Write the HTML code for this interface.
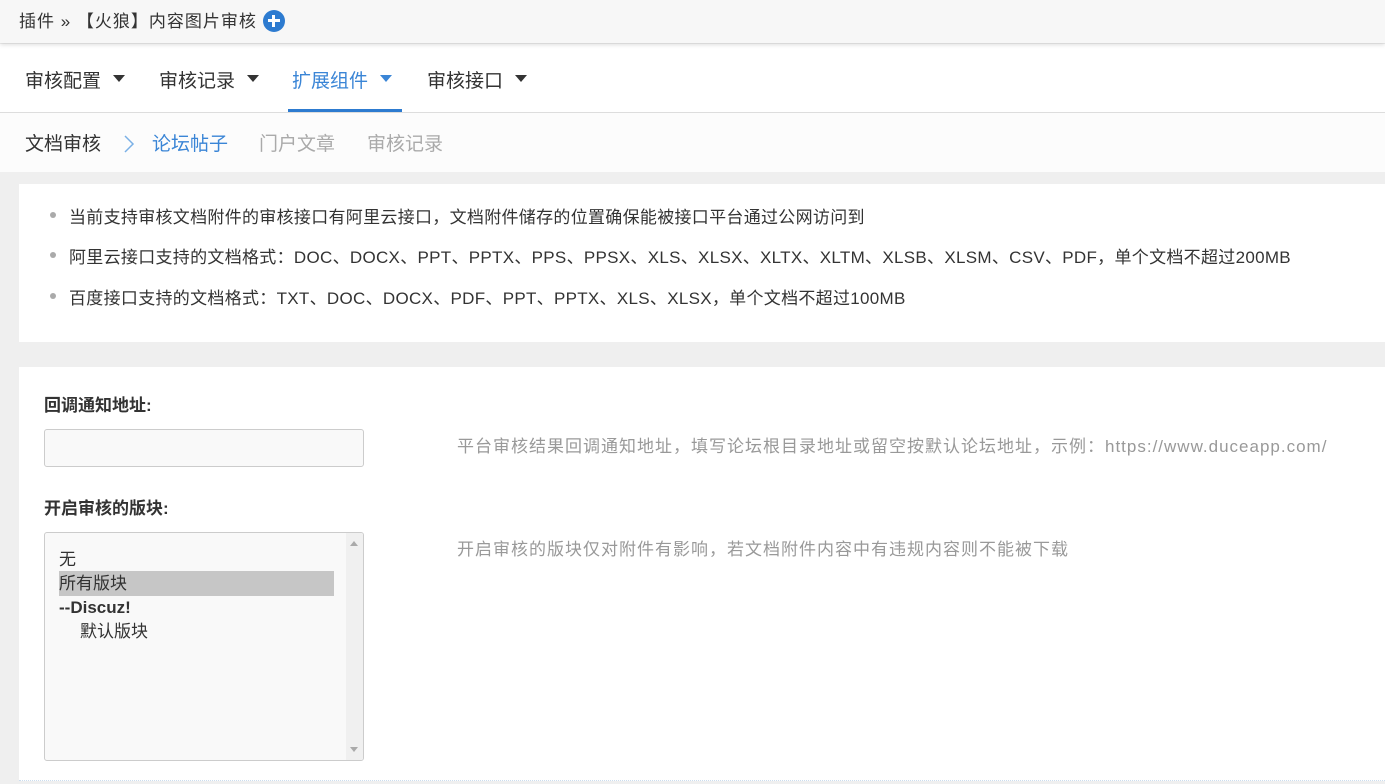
<!DOCTYPE html>
<html><head><meta charset="utf-8"><style>
*{margin:0;padding:0;box-sizing:border-box}
body{width:1385px;height:784px;overflow:hidden;background:#efefef;font-family:"Liberation Sans","Noto Sans CJK SC",sans-serif;color:#333;position:relative}
.top{position:absolute;left:0;top:0;width:1385px;height:43px;background:#f7f7f7;box-shadow:0 2px 4px rgba(0,0,0,.12);font-size:17px;line-height:43px;padding-left:19px;z-index:2;letter-spacing:1px}
.plus{display:inline-block;width:22px;height:22px;border-radius:50%;background:#2d7bd0;vertical-align:middle;position:relative;top:-2px;margin-left:6px}
.plus:before{content:"";position:absolute;left:5px;top:9.5px;width:12px;height:3px;background:#fff}
.plus:after{content:"";position:absolute;left:9.5px;top:5px;width:3px;height:12px;background:#fff}
.nav{position:absolute;top:44px;left:0;width:1385px;height:69px;background:#fff;border-bottom:1px solid #ddd}
.nav span{position:absolute;top:22px;font-size:19px;color:#333}
.nav span i{display:inline-block;border-left:6px solid transparent;border-right:6px solid transparent;border-top:7px solid #333;vertical-align:middle;margin-left:12px;position:relative;top:-3px}
.nav .act{color:#3a85d6}.nav .act i{border-top-color:#3a85d6}
.bar{position:absolute;top:65px;height:3px;background:#2d7bd0}
.sub{position:absolute;top:113px;left:0;width:1385px;height:59px;background:#fcfcfc;font-size:19px}
.sub span{position:absolute;top:16px}
.p1{position:absolute;left:19px;top:184px;width:1366px;height:158px;background:#fff;font-size:17px;color:#333;letter-spacing:0.3px}
.p1 div{position:absolute;left:50px}
.p1 b{position:absolute;left:-19px;top:9px;width:6px;height:6px;border-radius:50%;background:#aaa}
.p2{position:absolute;left:19px;top:367px;width:1366px;height:414px;background:#fff;border-bottom:1px dotted #cde}
.lab{position:absolute;left:25px;font-weight:bold;font-size:17px;color:#333}
.hint{position:absolute;left:438px;font-size:17px;color:#999;letter-spacing:1px}
.inp{position:absolute;left:25px;top:62px;width:320px;height:38px;border:1px solid #ccc;border-radius:3px;background:#f9f9f9}
.sel{position:absolute;left:25px;top:165px;width:320px;height:229px;border:1px solid #ccc;border-radius:3px;background:#f9f9f9;font-size:17px;overflow:hidden}
.sel p{position:absolute;left:14px;width:275px;height:25px;line-height:25px}
.sb{position:absolute;right:0;top:0;width:17px;height:100%;background:#f0f0f0}
.sb:before{content:"";position:absolute;left:4px;top:8px;border-left:4px solid transparent;border-right:4px solid transparent;border-bottom:5px solid #aaa}
.sb:after{content:"";position:absolute;left:4px;bottom:8px;border-left:4px solid transparent;border-right:4px solid transparent;border-top:5px solid #aaa}
</style></head><body>
<div class="top">插件 » 【火狼】内容图片审核<span class="plus"></span></div>
<div class="nav">
<span style="left:25px">审核配置<i></i></span>
<span style="left:159px">审核记录<i></i></span>
<span class="act" style="left:292px">扩展组件<i></i></span>
<span style="left:427px">审核接口<i></i></span>
<div class="bar" style="left:288px;width:114px"></div>
</div>
<div class="sub">
<span style="left:25px;color:#333">文档审核</span>
<svg style="position:absolute;left:122px;top:21px" width="14" height="20" viewBox="0 0 14 20"><path d="M3 2 L11 10 L3 18" fill="none" stroke="#7ab0e6" stroke-width="1.5"/></svg>
<span style="left:152px;color:#3a85d6">论坛帖子</span>
<span style="left:259px;color:#aaa">门户文章</span>
<span style="left:367px;color:#aaa">审核记录</span>
</div>
<div class="p1">
<div style="top:19px"><b></b>当前支持审核文档附件的审核接口有阿里云接口，文档附件储存的位置确保能被接口平台通过公网访问到</div>
<div style="top:59px"><b></b>阿里云接口支持的文档格式：DOC、DOCX、PPT、PPTX、PPS、PPSX、XLS、XLSX、XLTX、XLTM、XLSB、XLSM、CSV、PDF，单个文档不超过200MB</div>
<div style="top:100px"><b></b>百度接口支持的文档格式：TXT、DOC、DOCX、PDF、PPT、PPTX、XLS、XLSX，单个文档不超过100MB</div>
</div>
<div class="p2">
<div class="lab" style="top:24px">回调通知地址:</div>
<div class="inp"></div>
<div class="hint" style="top:65px">平台审核结果回调通知地址，填写论坛根目录地址或留空按默认论坛地址，示例：https://www.duceapp.com/</div>
<div class="lab" style="top:127px">开启审核的版块:</div>
<div class="sel">
<p style="top:14px">无</p>
<p style="top:38px;background:#c6c6c6">所有版块</p>
<p style="top:62px;font-weight:bold">--Discuz!</p>
<p style="top:86px;padding-left:21px">默认版块</p>
<span class="sb"></span>
</div>
<div class="hint" style="top:168px">开启审核的版块仅对附件有影响，若文档附件内容中有违规内容则不能被下载</div>
</div>
</body></html>
